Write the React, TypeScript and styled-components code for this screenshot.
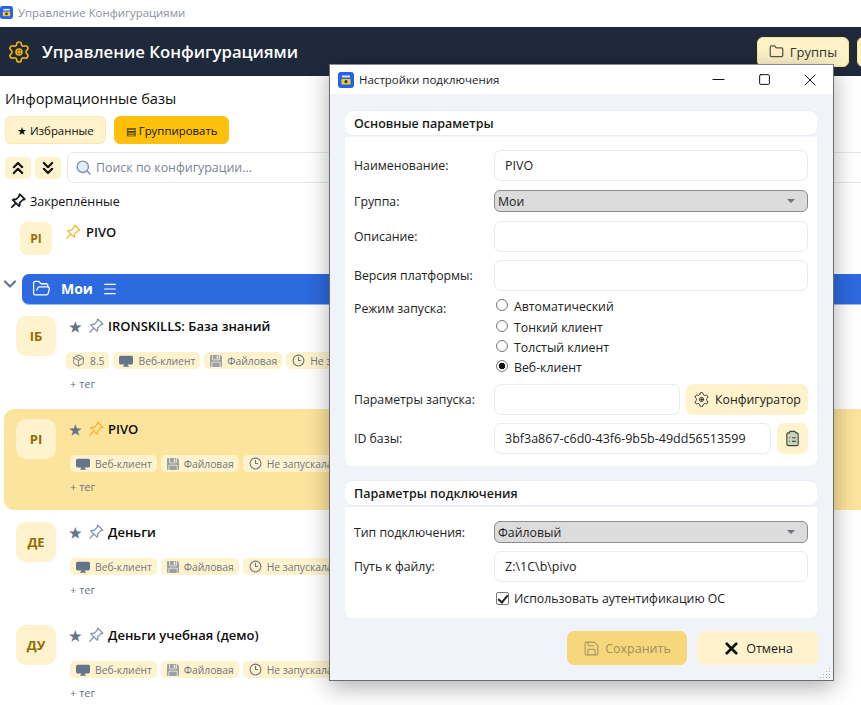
import React from 'react';
import styled, { createGlobalStyle } from 'styled-components';
import {
  ChevronDown,
  ChevronsDown,
  ChevronsUp,
  ClipboardList,
  Clock3,
  Folder,
  FolderOpen,
  Menu,
  Minus,
  Package,
  Save,
  Search,
  Settings,
  Square,
  X,
} from 'lucide-react';
import { BsPinAngle, BsDisplayFill, BsFillFloppyFill } from 'react-icons/bs';

const GlobalStyle = createGlobalStyle`
  html, body {
    margin: 0;
    height: 705px;
    overflow: hidden;
    background: #fff;
    font-family: "Open Sans", "Noto Sans", sans-serif;
    color: #111;
  }
`;

const Page = styled.div`
  position: relative;
  width: 861px;
  height: 705px;
  overflow: hidden;
`;

const TitleBar = styled.div`
  height: 27px;
  display: flex;
  align-items: center;
  gap: 5px;
  padding-bottom: 3px;
  box-sizing: border-box;
  font-size: 11.4px;
  color: #8b9098;
`;

const Header = styled.header`
  height: 49px;
  background: #1e293b;
  display: flex;
  align-items: center;
  padding: 0 12px 0 7px;
  gap: 11px;
`;

const HeaderTitle = styled.h1`
  flex: 1;
  margin: 0;
  font-size: 16.7px;
  font-weight: 600;
  color: #fff;
`;

const HeaderButton = styled.button`
  flex: none;
  height: 30px;
  width: 92px;
  border: 1px solid #fde68a;
  border-radius: 6px;
  background: #fef3c7;
  display: flex;
  align-items: center;
  justify-content: center;
  gap: 6px;
  font: inherit;
  font-size: 13px;
  color: #333;
  padding: 0;
`;

const HeaderStub = styled(HeaderButton)`
  margin-right: -48px;
  margin-left: -3px;
  width: 40px;
`;

const Heading = styled.h2`
  margin: 12px 0 7px 5px;
  font-size: 14.6px;
  line-height: 21px;
  font-weight: 500;
`;

const FilterRow = styled.div`
  display: flex;
  gap: 8px;
  margin-left: 5px;
`;

const FilterButton = styled.button<{ $active?: boolean }>`
  height: 28px;
  padding: 0 11px;
  border: 1px solid ${(p) => (p.$active ? '#fbbf24' : '#fde9b0')};
  border-radius: 6px;
  background: ${(p) => (p.$active ? '#ffc107' : '#fef3cd')};
  font: inherit;
  font-size: 11.4px;
  font-weight: 500;
  color: #111;
  white-space: nowrap;
`;

const SearchRow = styled.div`
  display: flex;
  align-items: center;
  gap: 4px;
  margin: 8px 0 0 5px;
  height: 31px;
`;

const FoldButton = styled.button`
  width: 26px;
  height: 22px;
  border: none;
  border-radius: 5px;
  background: #fef3cd;
  color: #111;
  padding: 0;
  display: flex;
  align-items: center;
  justify-content: center;
`;

const SearchBox = styled.div`
  flex: 1;
  height: 31px;
  margin-left: 2px;
  margin-right: -10px;
  box-sizing: border-box;
  border: 1px solid #e3e8f0;
  border-radius: 7px;
  display: flex;
  align-items: center;
  gap: 4px;
  padding-left: 7px;
  font-size: 12.4px;
  color: #7b8494;
`;

const PinnedLabel = styled.div`
  display: flex;
  align-items: center;
  gap: 4px;
  margin: 9px 0 0 10px;
  height: 18px;
  font-size: 12.5px;
  font-weight: 500;
`;

const PinnedRow = styled.div`
  display: flex;
  margin: 12px 0 0 20px;
  height: 33px;
`;

const PinnedAvatar = styled.div`
  width: 32px;
  height: 33px;
  border-radius: 7px;
  background: #fef3cd;
  color: #92700c;
  font-size: 12px;
  font-weight: 700;
  display: flex;
  align-items: center;
  justify-content: center;
  margin-right: 13px;
`;

const PinnedTitle = styled.div`
  display: flex;
  align-items: center;
  gap: 5px;
  height: 20px;
  font-size: 13px;
  font-weight: 600;
`;

const GroupRow = styled.div`
  display: flex;
  margin-top: 19px;
  height: 31px;
`;

const GroupToggle = styled.div`
  width: 22px;
  color: #64748b;
`;

const GroupBar = styled.div`
  flex: 1;
  display: flex;
  align-items: center;
  background: #2d6adf;
  border-bottom: 1px solid #9db9ee;
  border-radius: 7px 0 0 7px;
  padding: 0 0 1px 10px;
  color: #fff;
  font-size: 14px;
  font-weight: 700;
`;

const GroupName = styled.span`
  margin: 0 9px 0 10px;
`;

const Item = styled.article<{ $selected?: boolean }>`
  height: 101px;
  box-sizing: border-box;
  margin: 0 0 2px 4px;
  padding: 10px 12px;
  display: flex;
  gap: 10px;
  border-radius: 10px 0 0 10px;
  background: ${(p) => (p.$selected ? '#fde49c' : 'transparent')};
  &:first-of-type {
    margin-top: 1px;
  }
`;

const Avatar = styled.div`
  flex: none;
  width: 40px;
  height: 40px;
  border-radius: 10px;
  background: #fef3cd;
  color: #8f6b05;
  font-size: 13px;
  font-weight: 700;
  display: flex;
  align-items: center;
  justify-content: center;
`;

const ItemBody = styled.div`
  min-width: 0;
  flex: 1;
`;

const ItemTitle = styled.div`
  height: 20px;
  display: flex;
  align-items: center;
  padding-left: 3px;
  font-size: 13px;
  font-weight: 600;
  color: #0b0b0b;
  white-space: nowrap;
`;

const Star = styled.span`
  width: 19px;
  color: #64748b;
  font-size: 14px;
`;

const PinSlot = styled.span`
  width: 20px;
  display: flex;
`;

const Chips = styled.div<{ $flush?: boolean }>`
  display: flex;
  gap: 4px;
  margin: 16px 0 0 ${(p) => (p.$flush ? '0' : '4px')};
  white-space: nowrap;
`;

const Chip = styled.span`
  flex: none;
  height: 17px;
  padding: 0 5px 0 6px;
  border-radius: 5px;
  background: #fef3cd;
  display: flex;
  align-items: center;
  gap: 5px;
  font-size: 10.3px;
  color: #6f7784;
`;

const AddTag = styled.div`
  margin: 7px 0 0 4px;
  height: 16px;
  line-height: 16px;
  font-size: 11px;
  color: #64748b;
`;

const Dialog = styled.section`
  position: absolute;
  left: 329px;
  top: 64px;
  width: 505px;
  height: 617px;
  box-sizing: border-box;
  border: 1px solid #6c6c6c;
  border-top-color: #8a8a8a;
  background: #f0f3f8;
  box-shadow: 0 6px 22px rgba(0, 0, 0, 0.32);
`;

const DialogBar = styled.div`
  height: 29px;
  background: #fff;
  display: flex;
  align-items: center;
  padding-left: 8px;
  font-size: 11.5px;
  color: #222;
`;

const DialogTitle = styled.span`
  flex: 1;
  margin-left: 5px;
`;

const WinButton = styled.span`
  flex: none;
  width: 46px;
  display: flex;
  justify-content: center;
  color: #111;
`;

const DialogBody = styled.div`
  padding: 16px 16px 0 15px;
`;

const CardHead = styled.div`
  height: 26px;
  box-sizing: border-box;
  padding-left: 9px;
  background: #fff;
  border-radius: 8px;
  border: 1px solid #e7ebf3;
  border-left: none;
  border-right: none;
  display: flex;
  align-items: center;
  font-size: 12.5px;
  font-weight: 600;
  color: #1a1a1a;
`;

const CardBody = styled.div<{ $low?: boolean }>`
  margin: 1px 0 14px;
  padding: ${(p) => (p.$low ? '14px 9px 11px' : '13px 9px 12px')};
  background: #fff;
  border-radius: 0 0 8px 8px;
  display: flex;
  flex-direction: column;
  gap: 8px;
`;

const FormRow = styled.div<{ $top?: boolean; $shift?: number }>`
  display: flex;
  align-items: ${(p) => (p.$top ? 'flex-start' : 'center')};
  margin-top: ${(p) => p.$shift ?? 0}px;
  font-size: 12.3px;
  color: #222;
`;

const Label = styled.label<{ $top?: boolean }>`
  flex: none;
  width: 140px;
  ${(p) => (p.$top ? 'padding-top: 4px;' : '')}
`;

const TextField = styled.input`
  flex: 1;
  min-width: 0;
  height: 31px;
  box-sizing: border-box;
  border: 1px solid #e6eaf2;
  border-radius: 7px;
  background: #fff;
  padding: 0 10px;
  font: inherit;
  font-size: 12.5px;
  color: #222;
  outline: none;
`;

const SelectBox = styled.div`
  flex: 1;
  height: 22px;
  box-sizing: border-box;
  border: 1px solid #8c8c8c;
  border-radius: 6px;
  background: #dcdcdc;
  padding: 0 4px 0 3px;
  display: flex;
  align-items: center;
  justify-content: space-between;
`;

const Caret = styled.span`
  width: 0;
  height: 0;
  margin-right: 8px;
  border-left: 4px solid transparent;
  border-right: 4px solid transparent;
  border-top: 4px solid #6b7280;
`;

const RadioGroup = styled.div`
  display: flex;
  flex-direction: column;
`;

const RadioRow = styled.label`
  height: 20px;
  display: flex;
  align-items: center;
  gap: 6px;
  &:first-child {
    height: 21px;
    padding-bottom: 1px;
    box-sizing: border-box;
  }
`;

const Radio = styled.input`
  appearance: none;
  width: 12px;
  height: 12px;
  margin: 0 0 2px 2px;
  border: 1px solid #767676;
  border-radius: 50%;
  background: #fff;
  &:checked {
    background: radial-gradient(circle, #111 0 3px, #fff 3.6px);
  }
`;

const ActionButton = styled.button<{ $width: number }>`
  flex: none;
  width: ${(p) => p.$width}px;
  height: 31px;
  margin-left: 6px;
  border: none;
  border-radius: 7px;
  background: #fef3cd;
  color: #222;
  font: inherit;
  padding: 0;
  display: flex;
  align-items: center;
  justify-content: center;
  gap: 5px;
`;

const CheckRow = styled.label`
  margin-left: 140px;
  height: 18px;
  margin-top: -1px;
  display: flex;
  align-items: center;
  gap: 5px;
  font-size: 12.3px;
  color: #222;
`;

const Check = styled.input`
  appearance: none;
  position: relative;
  flex: none;
  width: 13px;
  height: 13px;
  margin: 0 0 0 2px;
  box-sizing: border-box;
  border: 1px solid #767676;
  border-radius: 2px;
  background: #fff;
  &::after {
    content: '';
    position: absolute;
    left: 3px;
    top: 0;
    width: 4px;
    height: 8px;
    border: solid #222;
    border-width: 0 2px 2px 0;
    transform: rotate(40deg);
  }
`;

const Footer = styled.div`
  display: flex;
  justify-content: flex-end;
  gap: 10px;
  margin: -1px -1px 0 0;
`;

const FooterButton = styled.button<{ $primary?: boolean }>`
  width: ${(p) => (p.$primary ? '120px' : '121px')};
  height: 34px;
  border: none;
  border-radius: 7px;
  background: ${(p) => (p.$primary ? '#f7d77c' : '#fef3cd')};
  color: ${(p) => (p.$primary ? '#a08f60' : '#1a1a1a')};
  font: inherit;
  font-size: 12.5px;
  display: flex;
  align-items: center;
  justify-content: center;
  gap: 5px;
`;

const Grip = styled.svg`
  position: absolute;
  right: 1px;
  bottom: 1px;
`;

const AppIcon = ({ size = 13 }: { size?: number }) => (
  <svg width={size} height={size} viewBox="0 0 16 16">
    <rect width="16" height="16" rx="3" fill="#2563eb" />
    <rect x="4" y="3.5" width="8" height="2" fill="#e5e7eb" />
    <rect x="3.5" y="7" width="9" height="5.5" fill="#facc15" />
    <circle cx="8" cy="9.7" r="1.6" fill="#1e3a8a" />
  </svg>
);

const Gear = ({ size, color, width = 1.6 }: { size: number; color: string; width?: number }) => (
  <Settings size={size} color={color} strokeWidth={width}>
    <circle cx="12" cy="12" r="1" fill={color} />
  </Settings>
);

const Pin = ({ color, heavy }: { color: string; heavy?: boolean }) => (
  <BsPinAngle size={16} color={color} stroke={color} strokeWidth={heavy ? 0.9 : 0.25} />
);

const ClientChip = () => (
  <Chip>
    <BsDisplayFill size={14} color="#64748b" />
    Веб-клиент
  </Chip>
);

const FileChip = () => (
  <Chip>
    <BsFillFloppyFill size={12} color="#9aa0a8" />
    Файловая
  </Chip>
);

const RunChip = () => (
  <Chip>
    <Clock3 size={13} color="#6b7280" />
    Не запускалась
  </Chip>
);

type Base = { short: string; name: string; version?: string; selected?: boolean };

const bases: Base[] = [
  { short: 'ІБ', name: 'IRONSKILLS: База знаний', version: '8.5' },
  { short: 'PI', name: 'PIVO', selected: true },
  { short: 'ДЕ', name: 'Деньги' },
  { short: 'ДУ', name: 'Деньги учебная (демо)' },
];

const BaseItem = ({ short, name, version, selected }: Base) => (
  <Item $selected={selected}>
    <Avatar>{short}</Avatar>
    <ItemBody>
      <ItemTitle>
        <Star>★</Star>
        <PinSlot>
          <Pin color={selected ? '#fbb024' : '#7c8ca3'} />
        </PinSlot>
        {name}
      </ItemTitle>
      <Chips $flush={!!version}>
        {version && (
          <Chip>
            <Package size={13} color="#8a8f98" />
            {version}
          </Chip>
        )}
        <ClientChip />
        <FileChip />
        <RunChip />
      </Chips>
      <AddTag>+ тег</AddTag>
    </ItemBody>
  </Item>
);

const launchModes = ['Автоматический', 'Тонкий клиент', 'Толстый клиент', 'Веб-клиент'];

const ConnectionDialog = () => (
  <Dialog>
    <DialogBar>
      <AppIcon size={16} />
      <DialogTitle>Настройки подключения</DialogTitle>
      <WinButton>
        <Minus size={19} strokeWidth={1} absoluteStrokeWidth />
      </WinButton>
      <WinButton>
        <Square size={13} strokeWidth={1} absoluteStrokeWidth />
      </WinButton>
      <WinButton>
        <X size={20} strokeWidth={1} absoluteStrokeWidth />
      </WinButton>
    </DialogBar>
    <DialogBody>
      <CardHead>Основные параметры</CardHead>
      <CardBody>
        <FormRow>
          <Label>Наименование:</Label>
          <TextField readOnly value="PIVO" />
        </FormRow>
        <FormRow $shift={1}>
          <Label>Группа:</Label>
          <SelectBox>
            Мои
            <Caret />
          </SelectBox>
        </FormRow>
        <FormRow $shift={1}>
          <Label>Описание:</Label>
          <TextField readOnly value="" />
        </FormRow>
        <FormRow>
          <Label>Версия платформы:</Label>
          <TextField readOnly value="" />
        </FormRow>
        <FormRow $top $shift={-3}>
          <Label $top>Режим запуска:</Label>
          <RadioGroup>
            {launchModes.map((mode) => (
              <RadioRow key={mode}>
                <Radio type="radio" name="mode" readOnly checked={mode === 'Веб-клиент'} />
                {mode}
              </RadioRow>
            ))}
          </RadioGroup>
        </FormRow>
        <FormRow $shift={-1}>
          <Label>Параметры запуска:</Label>
          <TextField readOnly value="" />
          <ActionButton $width={122}>
            <Gear size={17} color="#333" width={1.4} />
            Конфигуратор
          </ActionButton>
        </FormRow>
        <FormRow>
          <Label>ID базы:</Label>
          <TextField readOnly value="3bf3a867-c6d0-43f6-9b5b-49dd56513599" />
          <ActionButton $width={31}>
            <ClipboardList size={17} color="#3f4a45" fill="#c9d4b8" strokeWidth={1.6} />
          </ActionButton>
        </FormRow>
      </CardBody>
      <CardHead>Параметры подключения</CardHead>
      <CardBody $low>
        <FormRow>
          <Label>Тип подключения:</Label>
          <SelectBox>
            Файловый
            <Caret />
          </SelectBox>
        </FormRow>
        <FormRow>
          <Label>Путь к файлу:</Label>
          <TextField readOnly value="Z:\1C\b\pivo" />
        </FormRow>
        <CheckRow>
          <Check type="checkbox" readOnly checked />
          Использовать аутентификацию ОС
        </CheckRow>
      </CardBody>
      <Footer>
        <FooterButton $primary>
          <Save size={17} color="#a8956a" strokeWidth={1.5} />
          Сохранить
        </FooterButton>
        <FooterButton>
          <X size={19} strokeWidth={3.4} color="#111" />
          Отмена
        </FooterButton>
      </Footer>
    </DialogBody>
    <Grip width="12" height="12" viewBox="0 0 12 12" fill="#a9aeb6">
      <rect x="9" y="1" width="1" height="1" />
      <rect x="9" y="4" width="1" height="1" />
      <rect x="6" y="4" width="1" height="1" />
      <rect x="9" y="7" width="1" height="1" />
      <rect x="6" y="7" width="1" height="1" />
      <rect x="3" y="7" width="1" height="1" />
      <rect x="9" y="10" width="1" height="1" />
      <rect x="6" y="10" width="1" height="1" />
      <rect x="3" y="10" width="1" height="1" />
      <rect x="0" y="10" width="1" height="1" />
    </Grip>
  </Dialog>
);

const App = () => (
  <Page>
    <GlobalStyle />
    <TitleBar>
      <AppIcon />
      Управление Конфигурациями
    </TitleBar>
    <Header>
      <Gear size={24} color="#f5b50a" />
      <HeaderTitle>Управление Конфигурациями</HeaderTitle>
      <HeaderButton>
        <Folder size={15} color="#555" />
        Группы
      </HeaderButton>
      <HeaderStub />
    </Header>
    <main>
      <Heading>Информационные базы</Heading>
      <FilterRow>
        <FilterButton>★ Избранные</FilterButton>
        <FilterButton $active>▤ Группировать</FilterButton>
      </FilterRow>
      <SearchRow>
        <FoldButton>
          <ChevronsUp size={20} strokeWidth={2.6} />
        </FoldButton>
        <FoldButton>
          <ChevronsDown size={20} strokeWidth={2.6} />
        </FoldButton>
        <SearchBox>
          <Search size={17} color="#7b93b5" fill="#e4ecf7" />
          Поиск по конфигурации...
        </SearchBox>
      </SearchRow>
      <PinnedLabel>
        <Pin color="#111" heavy />
        Закреплённые
      </PinnedLabel>
      <PinnedRow>
        <PinnedAvatar>PI</PinnedAvatar>
        <PinnedTitle>
          <Pin color="#fbb024" />
          PIVO
        </PinnedTitle>
      </PinnedRow>
      <GroupRow>
        <GroupToggle>
          <ChevronDown size={20} strokeWidth={2.6} />
        </GroupToggle>
        <GroupBar>
          <FolderOpen size={19} strokeWidth={1.6} />
          <GroupName>Мои</GroupName>
          <Menu size={16} strokeWidth={1.8} />
        </GroupBar>
      </GroupRow>
      {bases.map((base) => (
        <BaseItem key={base.short} {...base} />
      ))}
    </main>
    <ConnectionDialog />
  </Page>
);

export default App;
